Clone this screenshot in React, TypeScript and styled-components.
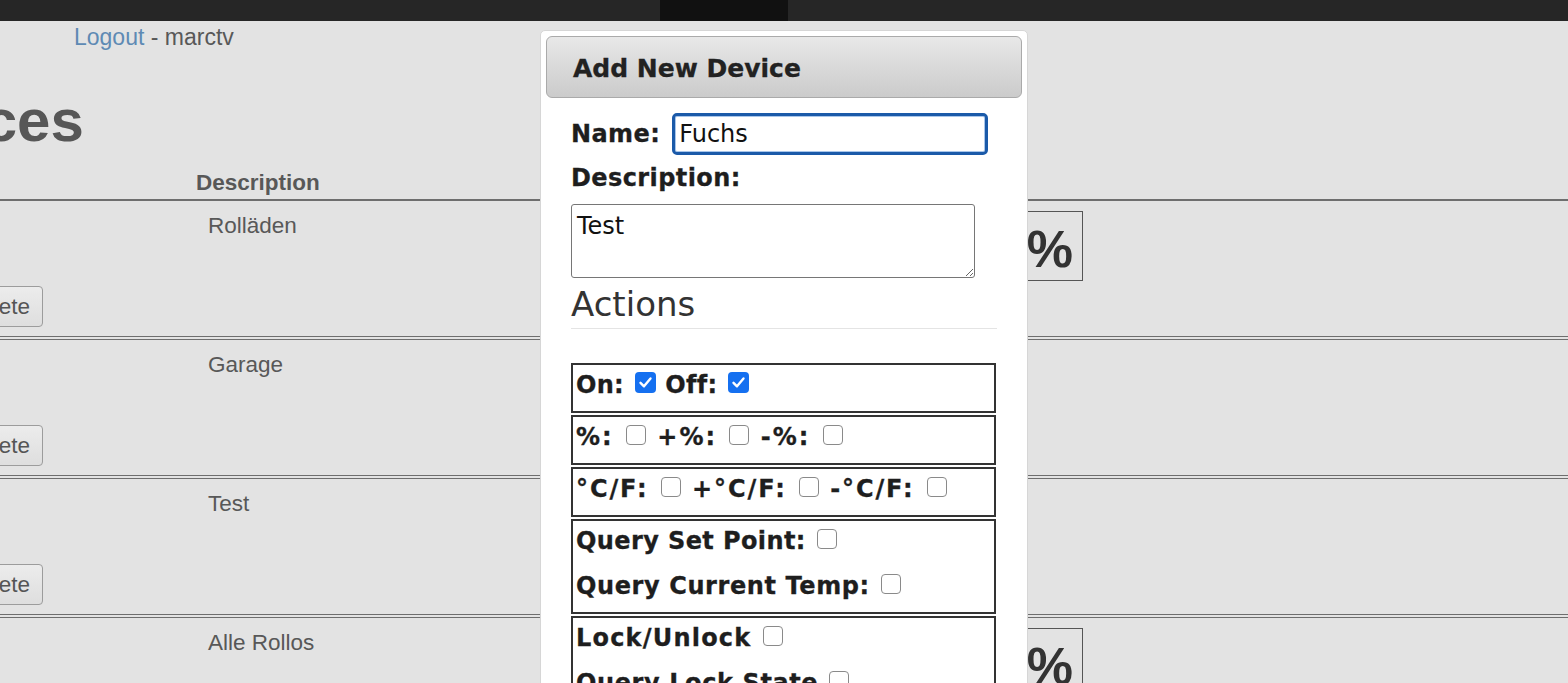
import React from "react";
import styled, { createGlobalStyle } from "styled-components";

const GlobalStyle = createGlobalStyle`
  html, body { margin: 0; padding: 0; }
  body {
    background: #e3e3e3;
    overflow: hidden;
    font-family: "Liberation Sans", Arial, sans-serif;
  }
`;

const Page = styled.div`
  position: relative;
  width: 1568px;
  height: 683px;
  overflow: hidden;
  background: #e3e3e3;
`;

const TopBar = styled.div`
  height: 21px;
  display: flex;
  padding-left: 660px;
  background: #262626;
`;

const TopTab = styled.div`
  width: 128px;
  background: #111111;
`;

/* page is scrolled horizontally: content starts left of the viewport */
const Content = styled.div`
  margin-left: -140px;
  color: #585858;
  font-size: 22.5px;
  line-height: 26px;
`;

const UserLine = styled.div`
  padding: 3px 0 0 214px;
  font-size: 23px;
`;

const Link = styled.a`
  color: #5e8ab4;
  text-decoration: none;
`;

const Title = styled.h1`
  margin: 37px 0 0 -3px;
  font-size: 60px;
  line-height: 68px;
  font-weight: bold;
  color: #575757;
`;

const Table = styled.div`
  margin-top: 15px;
  width: 1720px;
`;

const HeadRow = styled.div`
  display: grid;
  grid-template-columns: 336px 794px 1fr;
  padding-bottom: 3px;
  border-bottom: 1px solid #6e6e6e;
`;

const Th = styled.div`
  font-weight: bold;
`;

const Row = styled.div`
  display: grid;
  grid-template-columns: 336px 794px 1fr;
  height: 135px;
  border-top: 1px solid #6e6e6e;
  border-bottom: 1px solid #6e6e6e;
  & + & {
    margin-top: 2px;
  }
`;

const NameCell = styled.div`
  display: flex;
  flex-direction: column;
  justify-content: space-between;
  padding: 12px 0 9px 12px;
`;

const DeleteButton = styled.button`
  align-self: flex-start;
  margin-left: 80px;
  height: 41px;
  padding: 0 12px;
  font-family: "Liberation Sans", Arial, sans-serif;
  font-size: 22.5px;
  color: #555;
  background: linear-gradient(#ececec, #dedede);
  border: 1px solid #9c9c9c;
  border-radius: 4px;
`;

const DescCell = styled.div`
  padding: 12px 0 0 12px;
`;

const LevelCell = styled.div`
  padding-top: 10px;
`;

const LevelBox = styled.div`
  box-sizing: border-box;
  width: 93px;
  height: 70px;
  border: 1px solid #555;
  text-align: right;
  padding: 8px 9px 0 0;
  font-size: 52px;
  line-height: 58px;
  font-weight: bold;
  color: #333;
`;

/* ---------- modal ---------- */

const Modal = styled.div`
  position: absolute;
  left: 540px;
  top: 30px;
  width: 488px;
  height: 720px;
  box-sizing: border-box;
  padding: 5px;
  background: #ffffff;
  border: 1px solid #d6d6d6;
  border-radius: 5px;
  font-family: "DejaVu Sans", Verdana, sans-serif;
  color: #1e1e1e;
`;

const ModalHeader = styled.div`
  height: 62px;
  box-sizing: border-box;
  display: flex;
  align-items: center;
  padding: 3px 0 0 26px;
  border: 1px solid #aaaaaa;
  border-radius: 6px;
  background: linear-gradient(#e8e8e8, #cbcbcb);
  font-size: 25px;
  font-weight: bold;
  color: #222;
  -webkit-text-stroke: 0.3px #222;
`;

const ModalBody = styled.div`
  padding: 0 25px 0 25px;
`;

const FieldRow = styled.div`
  display: flex;
  align-items: center;
  gap: 12px;
  margin-top: 15px;
`;

const Label = styled.label<{ $block?: boolean }>`
  display: ${(p) => (p.$block ? "block" : "inline")};
  font-size: 24px;
  line-height: 28px;
  font-weight: bold;
  letter-spacing: 0.4px;
  -webkit-text-stroke: 0.3px #1e1e1e;
  margin-top: ${(p) => (p.$block ? "9px" : "0")};
`;

const TextInput = styled.input`
  box-sizing: border-box;
  width: 316px;
  height: 42px;
  padding: 0 4px;
  font-family: "DejaVu Sans", Verdana, sans-serif;
  font-size: 24px;
  color: #111;
  border: 3px solid #1b5aa9;
  box-shadow: inset 0 0 0 1px #a9c6ea;
  border-radius: 5px;
  outline: none;
`;

const TextArea = styled.textarea`
  display: block;
  box-sizing: border-box;
  width: 404px;
  height: 74px;
  margin-top: 12px;
  padding: 7px 5px;
  font-family: "DejaVu Sans", Verdana, sans-serif;
  font-size: 24px;
  line-height: 28px;
  color: #111;
  border: 1px solid #767676;
  border-radius: 3px;
`;

const SectionTitle = styled.h2`
  margin: 6px 0 0 0;
  padding-bottom: 3px;
  font-size: 34px;
  line-height: 41px;
  font-weight: normal;
  color: #333;
  border-bottom: 1px solid #e4e4e4;
`;

const ActionList = styled.div`
  margin-top: 34px;
  margin-right: 1px;
  display: flex;
  flex-direction: column;
  gap: 2px;
`;

const ActionBox = styled.div`
  border: 2px solid #333;
  padding: 0 3px 1px 3px;
`;

const ActionLine = styled.div<{ $spacing?: number }>`
  height: 45px;
  box-sizing: border-box;
  padding-top: 6px;
  font-size: 24px;
  line-height: 28px;
  font-weight: bold;
  white-space: pre;
  letter-spacing: ${(p) => p.$spacing ?? 0}px;
  -webkit-text-stroke: 0.3px #1e1e1e;
`;

const Box = styled.span<{ $checked?: boolean }>`
  display: inline-block;
  vertical-align: baseline;
  box-sizing: border-box;
  width: ${(p) => (p.$checked ? "21px" : "20px")};
  height: ${(p) => (p.$checked ? "21px" : "20px")};
  margin: 0 1px 0 2px;
  border-radius: 4px;
  border: ${(p) => (p.$checked ? "none" : "1px solid #8a8a8a")};
  background: ${(p) => (p.$checked ? "#1570f0" : "#ffffff")};
  svg {
    display: block;
  }
`;

const Check: React.FC<{ checked?: boolean }> = ({ checked }) => (
  <Box $checked={checked}>
    {checked && (
      <svg width="21" height="21" viewBox="0 0 21 21">
        <path
          d="M5.5 10.8 L9 14.3 L15.5 6.5"
          fill="none"
          stroke="#ffffff"
          strokeWidth="2.4"
          strokeLinecap="round"
          strokeLinejoin="round"
        />
      </svg>
    )}
  </Box>
);

const devices = [
  { name: "R1", desc: "Rolläden", level: true },
  { name: "G1", desc: "Garage", level: false },
  { name: "T1", desc: "Test", level: false },
  { name: "R2", desc: "Alle Rollos", level: true },
];

export default function App() {
  return (
    <Page>
      <GlobalStyle />
      <TopBar>
        <TopTab />
      </TopBar>
      <Content>
        <UserLine>
          <Link href="#">Logout</Link> - marctv
        </UserLine>
        <Title>Devices</Title>
        <Table>
          <HeadRow>
            <Th />
            <Th>Description</Th>
            <Th />
          </HeadRow>
          {devices.map((d) => (
            <Row key={d.name}>
              <NameCell>
                <span>{d.name}</span>
                <DeleteButton>Delete</DeleteButton>
              </NameCell>
              <DescCell>{d.desc}</DescCell>
              <LevelCell>{d.level && <LevelBox>0%</LevelBox>}</LevelCell>
            </Row>
          ))}
        </Table>
      </Content>

      <Modal>
        <ModalHeader>Add New Device</ModalHeader>
        <ModalBody>
          <FieldRow>
            <Label>Name:</Label>
            <TextInput defaultValue="Fuchs" />
          </FieldRow>
          <Label $block>Description:</Label>
          <TextArea defaultValue="Test" />
          <SectionTitle>Actions</SectionTitle>
          <ActionList>
            <ActionBox>
              <ActionLine $spacing={0.3}>
                On: <Check checked /> Off: <Check checked />
              </ActionLine>
            </ActionBox>
            <ActionBox>
              <ActionLine $spacing={2}>
                %: <Check /> +%: <Check /> -%: <Check />
              </ActionLine>
            </ActionBox>
            <ActionBox>
              <ActionLine $spacing={1.9}>
                °C/F: <Check /> +°C/F: <Check /> -°C/F: <Check />
              </ActionLine>
            </ActionBox>
            <ActionBox>
              <ActionLine $spacing={0.4}>
                Query Set Point: <Check />
              </ActionLine>
              <ActionLine $spacing={0.6}>
                Query Current Temp: <Check />
              </ActionLine>
            </ActionBox>
            <ActionBox>
              <ActionLine $spacing={1.2}>
                Lock/Unlock <Check />
              </ActionLine>
              <ActionLine $spacing={0.6}>
                Query Lock State <Check />
              </ActionLine>
            </ActionBox>
          </ActionList>
        </ModalBody>
      </Modal>
    </Page>
  );
}
